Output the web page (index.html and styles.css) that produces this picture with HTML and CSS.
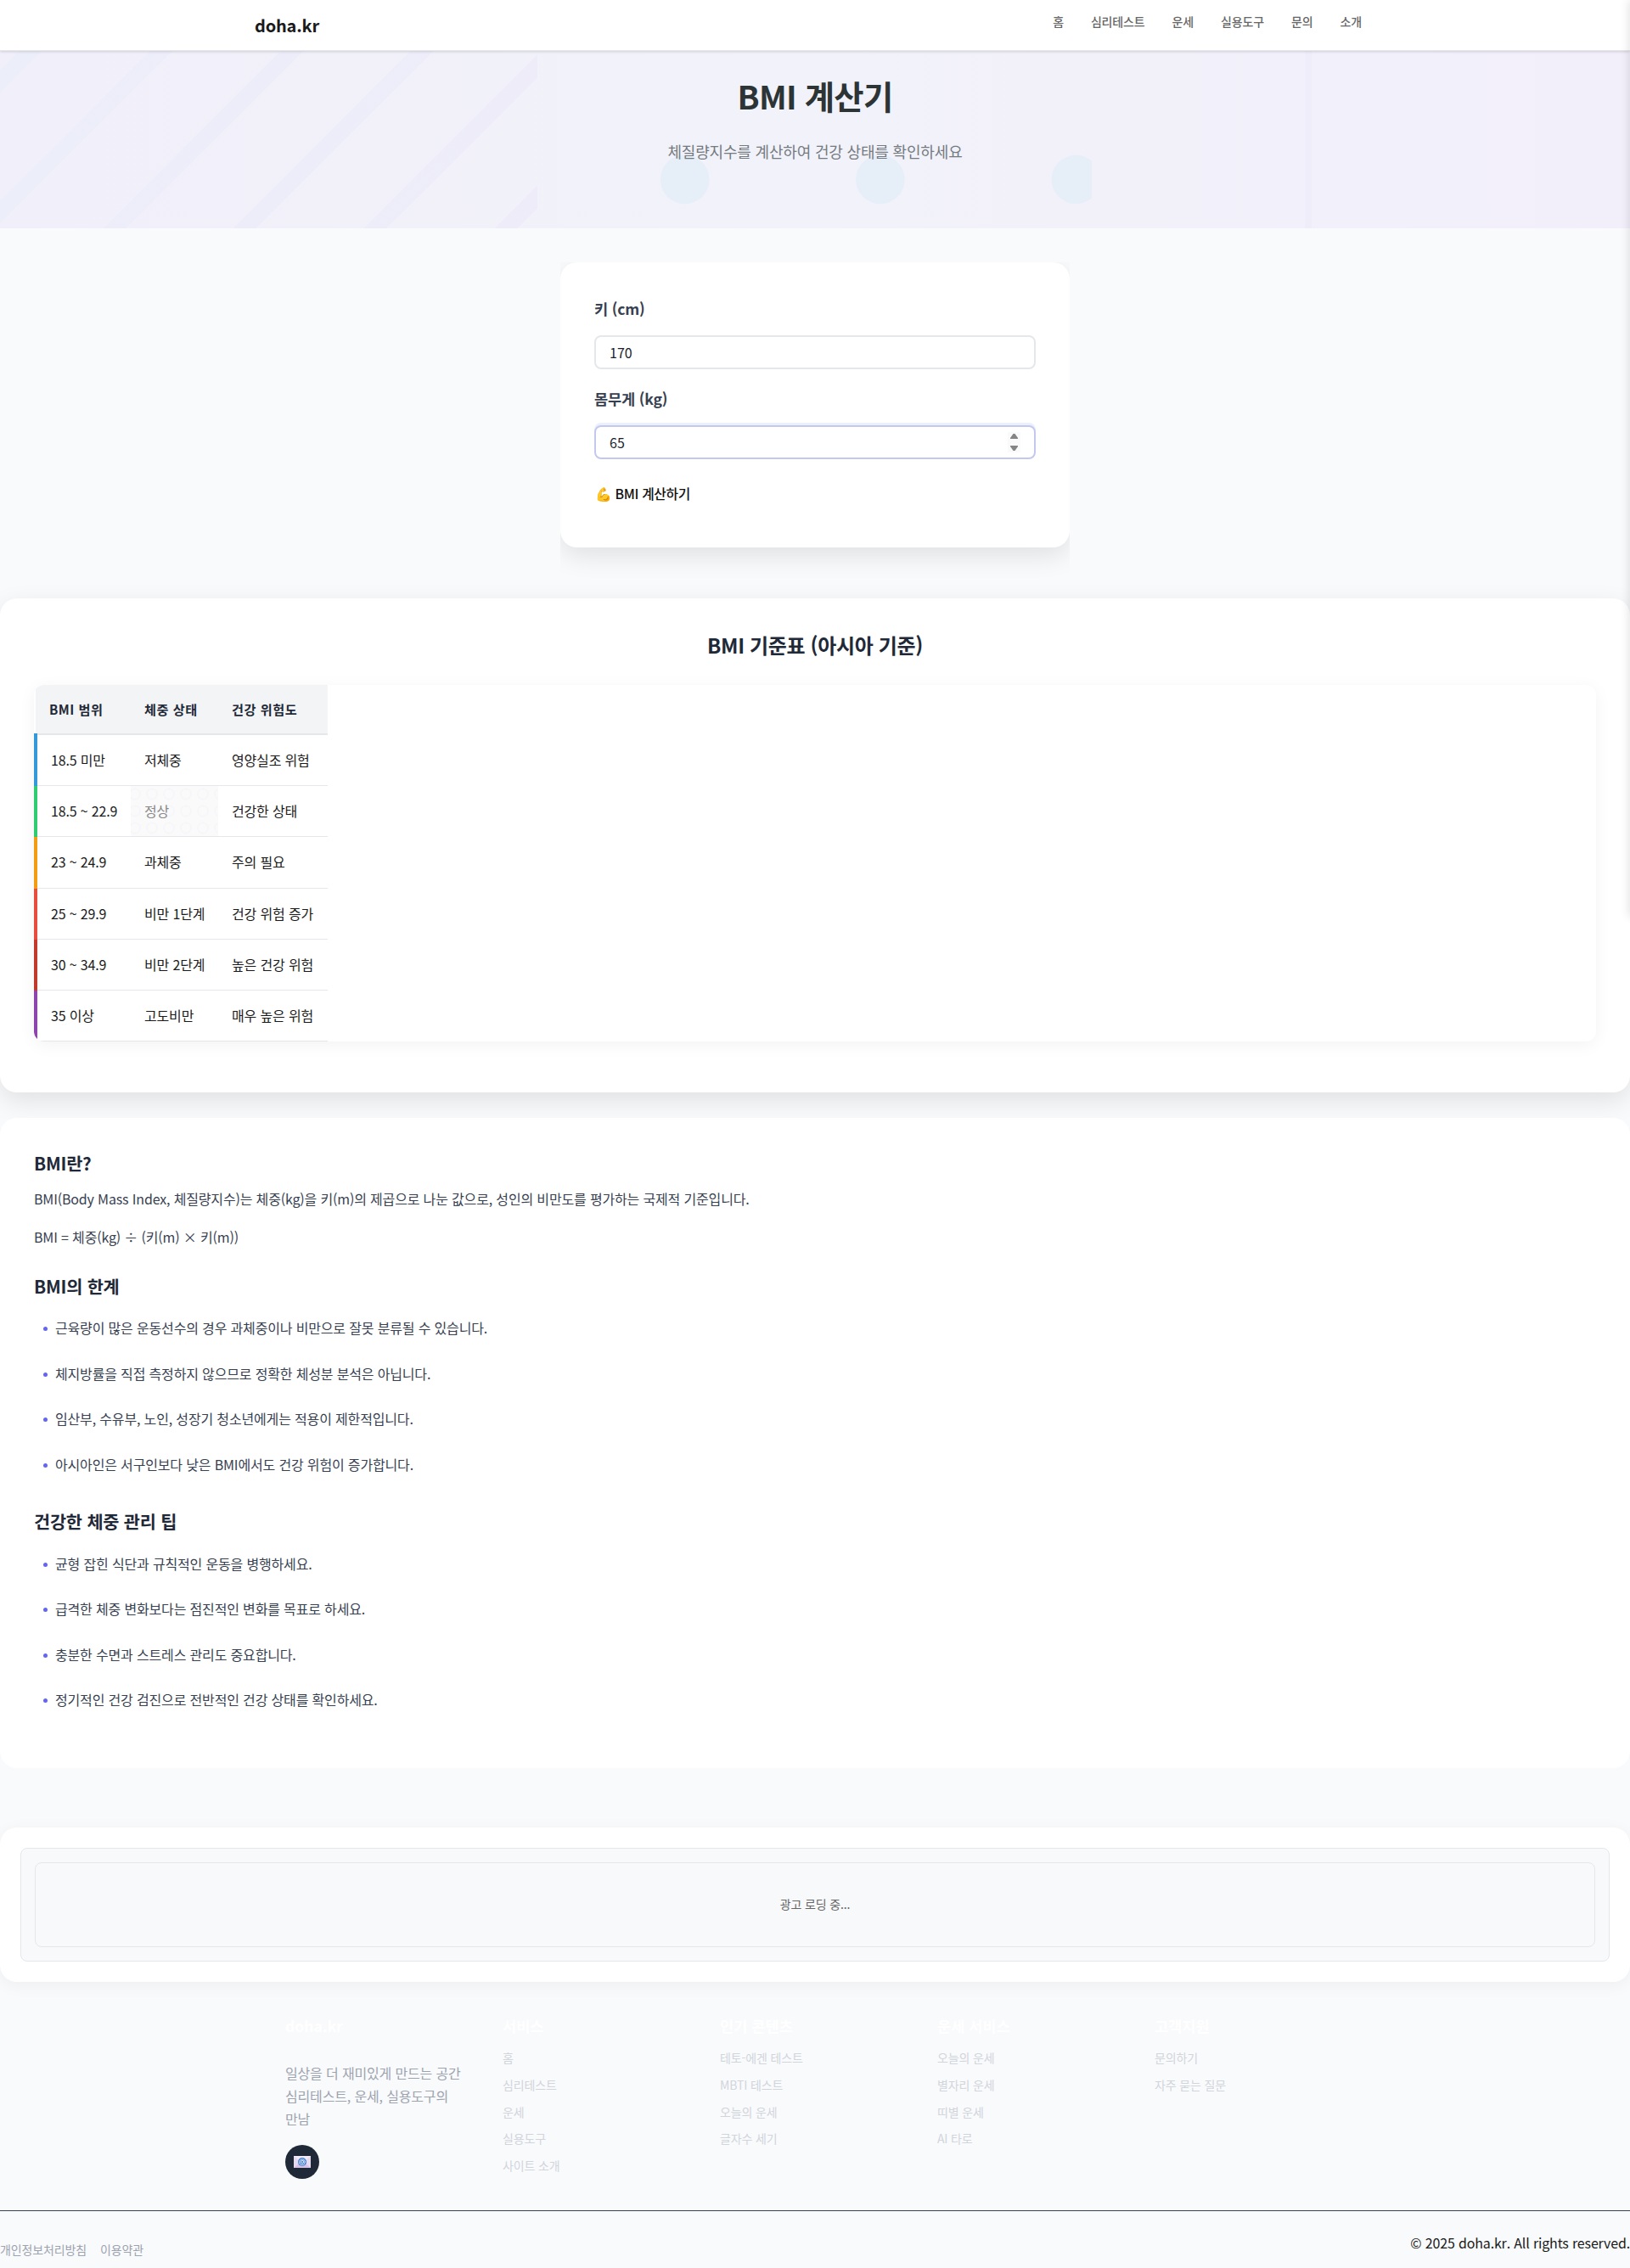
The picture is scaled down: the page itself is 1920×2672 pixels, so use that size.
FILE: index.html
```html
<!DOCTYPE html>
<html lang="ko">
<head>
<meta charset="utf-8">
<title>BMI 계산기 - doha.kr</title>
<link rel="stylesheet" href="styles.css">
</head>
<body>
<div class="page">
  <header class="header">
    <div class="header-inner">
      <a class="logo">doha.kr</a>
      <nav class="nav"><a>홈</a><a>심리테스트</a><a>운세</a><a>실용도구</a><a>문의</a><a>소개</a></nav>
    </div>
  </header>

  <section class="hero">
    <svg class="hero-art" width="1920" height="209" viewBox="0 60 1920 209" aria-hidden="true">
      <defs>
        <clipPath id="left"><rect x="0" y="60" width="633" height="210"/></clipPath>
        <clipPath id="mid"><rect x="633" y="60" width="653" height="210"/></clipPath>
        <linearGradient id="stripe" gradientUnits="userSpaceOnUse" x1="0" y1="0" x2="633" y2="0">
          <stop offset="0" stop-color="#eceefa"/><stop offset="1" stop-color="#eeecf9"/>
        </linearGradient>
      </defs>
      <g clip-path="url(#left)" stroke="url(#stripe)" stroke-width="19">
        <path d="M138 -42L-270 366M292 -42L-116 366M446 -42L38 366M599 -42L191 366M753 -42L345 366M907 -42L499 366"/>
      </g>
      <g clip-path="url(#mid)" fill="#e6eef8">
        <circle cx="806.7" cy="211.5" r="28.8"/><circle cx="1036.9" cy="211.5" r="28.8"/><circle cx="1267.3" cy="211.5" r="28.8"/>
      </g>
      <rect x="1537" y="60" width="8" height="210" fill="#efedf9"/>
    </svg>
    <h1>BMI 계산기</h1>
    <p>체질량지수를 계산하여 건강 상태를 확인하세요</p>
  </section>

  <main>
    <div class="form-wrap">
      <form class="form-card">
        <label for="h">키 (cm)</label>
        <input id="h" type="number" value="170">
        <label for="w">몸무게 (kg)</label>
        <div class="field">
          <input id="w" class="focused" type="number" value="65">
          <svg class="spin" width="15" height="24" viewBox="0 0 15 24" aria-hidden="true"><path fill="#fafafa" d="M0 0h15v24H0z"/><path fill="#858585" d="M3 8v-1L6.5 2h2L12 7v1zM3 16v1l3.500 5h2L12 17v-1z"/></svg>
        </div>
        <button type="button"><span class="emoji">💪</span> BMI 계산하기</button>
      </form>
    </div>

    <section class="standard">
      <h2>BMI 기준표 (아시아 기준)</h2>
      <div class="table-box">
        <table>
          <thead><tr><th>BMI 범위</th><th>체중 상태</th><th>건강 위험도</th></tr></thead>
          <tbody>
            <tr class="under"><td>18.5 미만</td><td>저체중</td><td>영양실조 위험</td></tr>
            <tr class="normal"><td>18.5 ~ 22.9</td><td class="current">정상</td><td>건강한 상태</td></tr>
            <tr class="over"><td>23 ~ 24.9</td><td>과체중</td><td>주의 필요</td></tr>
            <tr class="obese1"><td>25 ~ 29.9</td><td>비만 1단계</td><td>건강 위험 증가</td></tr>
            <tr class="obese2"><td>30 ~ 34.9</td><td>비만 2단계</td><td>높은 건강 위험</td></tr>
            <tr class="obese3"><td>35 이상</td><td>고도비만</td><td>매우 높은 위험</td></tr>
          </tbody>
        </table>
      </div>
    </section>

    <section class="info">
      <h3>BMI란?</h3>
      <p>BMI(Body Mass Index, 체질량지수)는 체중(kg)을 키(m)의 제곱으로 나눈 값으로, 성인의 비만도를 평가하는 국제적 기준입니다.</p>
      <p>BMI = 체중(kg) ÷ (키(m) × 키(m))</p>
      <h3>BMI의 한계</h3>
      <ul>
        <li>근육량이 많은 운동선수의 경우 과체중이나 비만으로 잘못 분류될 수 있습니다.</li>
        <li>체지방률을 직접 측정하지 않으므로 정확한 체성분 분석은 아닙니다.</li>
        <li>임산부, 수유부, 노인, 성장기 청소년에게는 적용이 제한적입니다.</li>
        <li>아시아인은 서구인보다 낮은 BMI에서도 건강 위험이 증가합니다.</li>
      </ul>
      <h3>건강한 체중 관리 팁</h3>
      <ul>
        <li>균형 잡힌 식단과 규칙적인 운동을 병행하세요.</li>
        <li>급격한 체중 변화보다는 점진적인 변화를 목표로 하세요.</li>
        <li>충분한 수면과 스트레스 관리도 중요합니다.</li>
        <li>정기적인 건강 검진으로 전반적인 건강 상태를 확인하세요.</li>
      </ul>
    </section>

    <section class="ad"><div class="ad-outer"><div class="ad-inner">광고 로딩 중...</div></div></section>
  </main>

  <footer class="footer">
    <div class="footer-cols">
      <div class="brand">
        <h4>doha.kr</h4>
        <p>일상을 더 재미있게 만드는 공간<br>심리테스트, 운세, 실용도구의 만남</p>
        <a class="mail"><svg width="20" height="14" viewBox="0 0 20 14" aria-hidden="true"><path fill="#e6daf0" d="M0 0h20v14H0z"/><path fill="#f3ecf8" d="M0 0h20L10 8z"/><path fill="#d6c2e8" d="M0 14L7 8h6l7 6z"/><circle cx="10" cy="7" r="5" fill="#3f7fd6"/><path fill="none" stroke="#dfe6f7" stroke-width="1" d="M12.800 9.200A3.400 3.400 0 1 1 13.400 7c0 1.700-1.800 1.600-1.800.2V5.600M11.600 7a1.600 1.600 0 1 1-3.200 0a1.600 1.600 0 0 1 3.200 0"/></svg></a>
      </div>
      <div><h4>서비스</h4><a>홈</a><a>심리테스트</a><a>운세</a><a>실용도구</a><a>사이트 소개</a></div>
      <div><h4>인기 콘텐츠</h4><a>테토-에겐 테스트</a><a>MBTI 테스트</a><a>오늘의 운세</a><a>글자수 세기</a></div>
      <div><h4>운세 서비스</h4><a>오늘의 운세</a><a>별자리 운세</a><a>띠별 운세</a><a>AI 타로</a></div>
      <div><h4>고객지원</h4><a>문의하기</a><a>자주 묻는 질문</a></div>
    </div>
    <div class="footer-bottom">
      <div class="legal"><a>개인정보처리방침</a><a>이용약관</a></div>
      <p>© 2025 doha.kr. All rights reserved.</p>
    </div>
  </footer>
  <aside class="drawer"></aside>
</div>
</body>
</html>
```
FILE: styles.css
```css
* { box-sizing: border-box; margin: 0; padding: 0; }
body { background: #f9fafc; color: #1a1a1a; font: 16px/1.7 "Noto Sans CJK KR", "Noto Sans", sans-serif; letter-spacing: -.01em; word-break: keep-all; }
a, p, h2, h3, h4, li, td, label, button, .ad-inner { letter-spacing: -.01em; }
.page { position: relative; width: 1920px; height: 2672px; overflow: hidden; }
.drawer { position: absolute; top: 0; left: 100%; width: 280px; height: 1080px; z-index: 20; box-shadow: -2px 0 10px rgba(0,0,0,.1); }

.header { position: relative; z-index: 2; height: 60px; background: #fff; border-bottom: 1px solid #e5e7eb; box-shadow: 0 1px 3px rgba(0,0,0,.15); }
.header-inner { width: 1320px; margin: 0 auto; display: flex; justify-content: space-between; }
.logo { font-size: 20px; font-weight: 700; line-height: 60px; }
.nav { display: flex; padding-top: 13px; }
.nav a { padding: 0 16px; font-size: 14px; line-height: 24px; font-weight: 500; color: #666; }

.hero { position: relative; height: 209px; padding-top: 25px; text-align: center; background: linear-gradient(90deg, #f1f0fa, #f2f2fa 50%, #f2effa); }
.hero-art { position: absolute; left: 0; top: 0; }
.hero h1 { position: relative; font-size: 38.4px; font-weight: 700; line-height: 54px; letter-spacing: -.02em; color: #2d3436; }
.hero p { position: relative; margin-top: 24px; font-size: 18px; line-height: 30px; color: #747b80; }

.form-wrap { width: 600px; height: 396px; margin: 40px auto 0; overflow: hidden; }
.form-card { height: 336px; padding: 40px; background: #fff; border-radius: 20px; box-shadow: 0 10px 30px rgba(0,0,0,.1); }
.form-card label { display: block; height: 46px; line-height: 30px; font-size: 17.6px; font-weight: 600; color: #374151; }
.form-card input { display: block; width: 520px; height: 40px; margin-bottom: 20px; padding: 0 16px 1px; border: 2px solid #e5e7eb; border-radius: 8px; background: #fff; font: 16px "Noto Sans CJK KR", sans-serif; color: #1a1f2e; outline: none; appearance: textfield; }
.field { position: relative; margin-bottom: 27px; }
.form-card input.focused { border-color: #c5c8ee; box-shadow: 0 -3px 0 #eaf0fc; margin-bottom: 0; }
.spin { position: absolute; right: 18px; top: 8px; }
.form-card button { border: 0; padding-left: 1px; background: none; font: 500 15.8px/27px "Noto Sans CJK KR", sans-serif; letter-spacing: -.02em; color: #111; }
.emoji { font-family: "Noto Color Emoji", sans-serif; font-size: 15.8px; }

.standard { height: 582px; padding: 39px 40px 40px; border-radius: 20px; background: #fff; box-shadow: 0 10px 30px rgba(0,0,0,.1); }
.standard h2 { height: 63px; line-height: 32px; font-size: 24px; font-weight: 700; text-align: center; color: #1f2937; letter-spacing: -.015em; }
.table-box { height: 420px; border-radius: 12px; overflow: hidden; box-shadow: 0 4px 20px rgba(0,0,0,.05); }
table { border-collapse: collapse; table-layout: fixed; width: 344px; }
th { width: 103px; height: 58px; padding: 0 16px; text-align: left; white-space: nowrap; font-size: 15.2px; font-weight: 700; letter-spacing: .5px; color: #1f2937; background: #f3f4f6; border-bottom: 2px solid #e5e7eb; }
th:first-child { width: 112px; }
th:last-child { width: 129px; }
td { height: 60px; padding: 2px 16px 0; white-space: nowrap; border-bottom: 1px solid #e5e7eb; }
.under td { padding-top: 0; }
.over td { height: 61px; padding-top: 0; }
td:first-child { border-left: 4px solid; }
.under td:first-child { border-left-color: #3498db; }
.normal td:first-child { border-left-color: #2ecc71; }
.over td:first-child { border-left-color: #f39c12; }
.obese1 td:first-child { border-left-color: #e74c3c; }
.obese2 td:first-child { border-left-color: #c0392b; }
.obese3 td:first-child { border-left-color: #8e44ad; }
.current { color: #888; background: radial-gradient(circle, transparent 5px, #f6f6fa 5.5px, #f6f6fa 6.5px, transparent 7px) -5px 0 / 20px 20px, #fafafb; }

.info { height: 766px; margin-top: 30px; padding: 37px 40px; border-radius: 20px; background: #fff; color: #374151; }
.info h3 { height: 36px; line-height: 32px; font-size: 20.8px; font-weight: 700; color: #1f2937; }
.info p { line-height: 29px; height: 29px; margin: 8px 0 16px; }
.info p + p { margin-bottom: 27px; margin-top: 0; }
.info ul { list-style: none; padding: 3px 0 24px 11px; }
.info li { display: flex; align-items: center; gap: 11px; height: 53.6px; }
.info li::before { content: ""; width: 5px; height: 5px; margin-top: 2px; margin-right: -2px; border-radius: 50%; background: #6366f1; }

.ad { height: 182px; margin-top: 70px; padding: 24px; border-radius: 20px; background: #fff; box-shadow: 0 4px 20px rgba(0,0,0,.05); }
.ad-outer { height: 134px; padding: 16px; background: #f8f9fb; border: 1px solid #e5e7eb; border-radius: 8px; }
.ad-inner { height: 100px; border: 1px solid #e5e7eb; border-radius: 8px; text-align: center; line-height: 96px; font-size: 14px; color: #666; }

.footer-cols { display: grid; grid-template-columns: repeat(5, 224px); gap: 32px; width: 1248px; height: 269px; margin: 0 auto; padding-top: 37px; }
.footer h4 { height: 40px; line-height: 30px; font-size: 17.6px; font-weight: 700; letter-spacing: 0; color: #fff; }
.footer-cols a { display: block; height: 31.8px; line-height: 24px; font-size: 14px; color: #d1d5db; }
.brand p { padding-top: 17px; line-height: 27.2px; font-size: 16px; color: #9ca3af; }
.footer-cols .mail { display: flex; align-items: center; justify-content: center; width: 40px; height: 40px; margin-top: 16px; padding-top: 1px; border-radius: 50%; background: #1f2937; }
.footer-bottom { display: flex; justify-content: space-between; border-top: 1px solid #374151; padding-top: 24px; }
.legal { display: flex; gap: 16px; padding-top: 9px; font-size: 14px; line-height: 24px; color: #9ca3af; }
```
